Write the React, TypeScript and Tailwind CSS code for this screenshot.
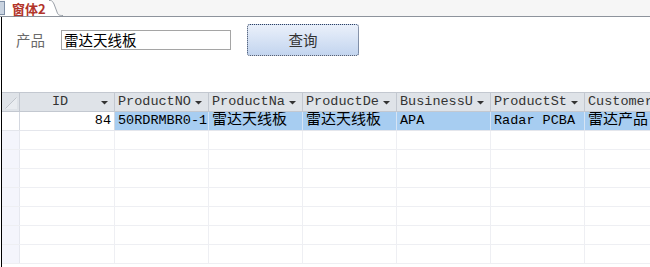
import React from 'react'

const cols = [
  { key: 'ProductNO', width: 'w-[94px]' },
  { key: 'ProductName', width: 'w-[94px]' },
  { key: 'ProductDe', width: 'w-[94px]' },
  { key: 'BusinessUnit', width: 'w-[94px]' },
  { key: 'ProductStatus', width: 'w-[94px]' },
  { key: 'CustomerName', width: 'w-[94px]' },
]

const rowData = ['50RDRMBR0-1', '雷达天线板', '雷达天线板', 'APA', 'Radar PCBA', '雷达产品']

const gridFont = "font-['Liberation_Mono','Noto_Sans_CJK_SC',monospace]"

// 中文单元格字号稍大
const isCjk = (s: string) => /[^\x00-\x7f]/.test(s)

function Arrow() {
  return (
    <svg width="7" height="5" viewBox="0 0 7 5" className="shrink-0">
      <path d="M0 1h7L3.5 4.5z" fill="#333" />
    </svg>
  )
}

function HeaderCell({ label, width, center }: { label: string; width: string; center?: boolean }) {
  return (
    <div className={`${width} shrink-0 h-full flex items-center border-r border-[#c3c8d0] pl-[3px] pr-[6px] gap-1`}>
      <span className={`flex-1 min-w-0 overflow-hidden whitespace-nowrap text-[13.5px] text-[#333] ${center ? 'text-center' : ''}`}>
        {label}
      </span>
      <Arrow />
    </div>
  )
}

export default function App() {
  const emptyRows = Array.from({ length: 7 })

  return (
    <div className="w-[650px] h-[267px] overflow-hidden bg-white flex flex-col font-['Noto_Sans_CJK_SC',sans-serif]">
      {/* 标签栏 */}
      <div className="h-[17px] shrink-0 bg-[#f6f6f6] border-b border-[#8d939c] flex items-stretch">
        <div className="w-[5px] h-[14px] mt-px bg-[#c9d3e0] border border-[#7f8fa6] border-l-0" />
        <div className="flex items-stretch">
          <div className="bg-white pl-[7px] pr-[3px] flex items-center text-[13px] leading-none font-bold text-[#b2352b]">
            窗体2
          </div>
          <svg width="14" height="16" viewBox="0 0 14 16" className="block">
            <path d="M0 0 C3 0 3 0 5 4 L8 12 C9 15 10 16 14 16 L0 16 Z" fill="#fff" />
            <path d="M0 0.5 C3 0.5 3 0.5 5 4 L8 12 C9 15 10 15.5 14 15.5" fill="none" stroke="#9aa0a8" strokeWidth="1" />
          </svg>
        </div>
      </div>

      {/* 主体 */}
      <div className="flex-1 ml-px border-l border-black flex flex-col min-h-0">
        {/* 查询区 */}
        <div className="h-[75px] shrink-0 pt-[7px] pl-[14px] flex items-start">
          <div className="h-[32px] flex items-center">
            <span className="text-[14.5px] text-[#6a6a6a] w-[45px]">产品</span>
            <div className="w-[170px] h-[20px] border border-[#a5a5a5] bg-white flex items-center pl-[2px] text-[14.5px] text-black leading-none">
              雷达天线板
            </div>
            <button className="ml-[16px] w-[112px] h-[32px] rounded-[3px] border border-dotted border-[#30405e] bg-gradient-to-b from-[#eaf0fa] to-[#c3d5ef] text-[14.5px] text-[#333] flex items-center justify-center">
              查询
            </button>
          </div>
        </div>

        {/* 数据表 */}
        <div className={`flex-1 flex flex-col ${gridFont}`}>
          <div className="h-[20px] shrink-0 flex border-t border-b border-[#c3c8d0] bg-[#dfe3e8]">
            <div className="w-[18px] shrink-0 h-full border-r border-[#c3c8d0] flex items-end justify-center pb-[2px]">
              <svg width="12" height="12" viewBox="0 0 12 12">
                <path d="M0 12L12 0V12Z" fill="#e9ecf0" />
                <path d="M0.5 11.5L11.5 0.5" stroke="#c0c5cc" strokeWidth="1" />
              </svg>
            </div>
            <HeaderCell label="ID" width="w-[95px]" center />
            {cols.map(c => (
              <HeaderCell key={c.key} label={c.key} width={c.width} />
            ))}
          </div>

          <div className="h-[19px] shrink-0 flex border-b border-[#e4e6ec]">
            <div className="w-[18px] shrink-0 h-full bg-white border-r border-[#d4d8e0]" />
            <div className="w-[95px] shrink-0 h-full bg-white border-r border-[#d4d8e0] flex items-center justify-end pr-[3px] text-[13.5px] text-black">
              84
            </div>
            {rowData.map((v, i) => (
              <div
                key={i}
                className={`w-[94px] shrink-0 h-full bg-[#a7cdf1] border-r border-[#d6e4f4] flex items-center pl-[3px] overflow-hidden whitespace-nowrap text-black ${isCjk(v) ? 'text-[15px]' : 'text-[13.5px]'}`}
              >
                {v}
              </div>
            ))}
          </div>

          {emptyRows.map((_, r) => (
            <div key={r} className="h-[19px] shrink-0 flex border-b border-[#eeeff3]">
              <div className="w-[18px] shrink-0 h-full bg-[#f4f5fc] border-r border-[#e6e8ef]" />
              <div className="w-[95px] shrink-0 h-full border-r border-[#eeeff3]" />
              {cols.map(c => (
                <div key={c.key} className={`${c.width} shrink-0 h-full border-r border-[#eeeff3]`} />
              ))}
            </div>
          ))}
        </div>
      </div>
    </div>
  )
}
